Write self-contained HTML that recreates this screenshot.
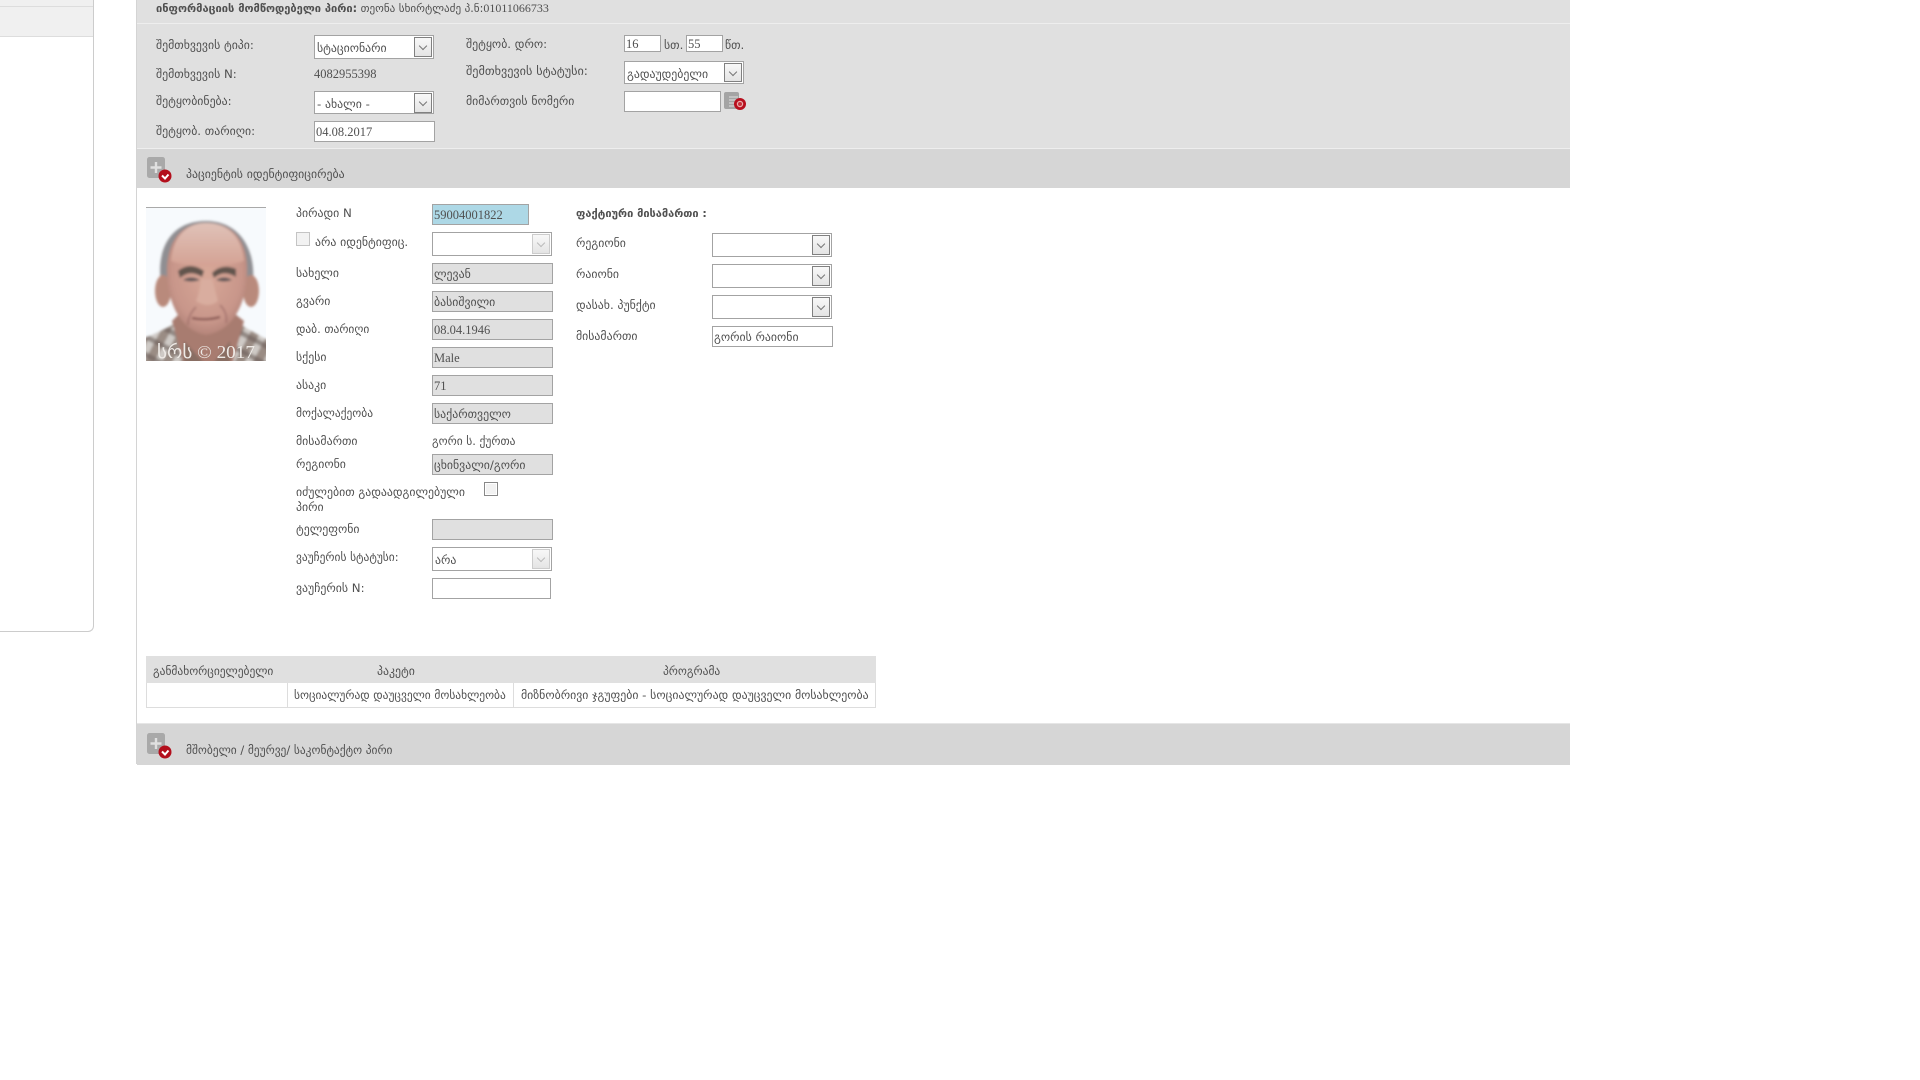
<!DOCTYPE html>
<html lang="ka"><head><meta charset="utf-8"><title>ფორმა</title>
<style>
html,body{margin:0;padding:0;background:#fff;width:1920px;height:1080px;overflow:hidden}
body{position:relative;font-family:"Liberation Serif","DejaVu Sans",sans-serif;font-size:12px;color:#444}
div,span,svg{position:absolute;box-sizing:border-box}
.t{line-height:16px;white-space:nowrap;font-family:"DejaVu Sans",sans-serif;font-size:11.8px;color:#505050;padding-top:1px}
.m{font-size:11.45px}
.n{font-family:"Liberation Serif",serif;font-size:12.5px}
.b{font-weight:bold}
.i{background:#fff;border:1px solid #a3a3a3;line-height:21px;padding-left:1px;white-space:nowrap;font-size:12.5px;color:#505050;font-family:"Liberation Serif","DejaVu Sans",sans-serif}
.k{font-size:11.8px;font-family:"DejaVu Sans",sans-serif}
.g{background:#e0e0e0}
.s{background:#fff;border:1px solid #a3a3a3;height:24px;width:120px;line-height:25px;padding-left:2px;color:#505050;white-space:nowrap;font-size:11.8px;font-family:"DejaVu Sans",sans-serif}
.a{right:1px;top:1px;width:18px;height:20px;background:linear-gradient(#f8f8f8,#e4e4e4);border:1px solid #808080}
.d{border-color:#ccc}
.a:after{content:"";position:absolute;left:5px;top:5px;width:5px;height:5px;border-right:1px solid #777;border-bottom:1px solid #777;transform:rotate(45deg)}
.d:after{border-color:#bbb}
.x{width:14px;height:14px;background:#f2f2f2;border:1px solid #c4c4c4}
.h{left:137px;width:1433px;background:#d6d6d6}
</style></head><body>

<!-- sidebar -->
<div style="left:0;top:0;width:94px;height:632px;border-right:1px solid #ccc;border-bottom:1px solid #ccc;border-bottom-right-radius:6px"></div>
<div style="left:0;top:0;width:93px;height:37px;background:#f0f0f0;border-bottom:1px solid #ddd"></div>
<div style="left:0;top:6px;width:93px;height:1px;background:#ddd"></div>

<!-- main -->
<div style="left:136px;top:0;width:1px;height:764px;background:#d4d4d4"></div>
<div style="left:137px;top:0;width:1433px;height:149px;background:#e0e0e0"></div>
<div style="left:137px;top:23px;width:1433px;height:1px;background:#eee"></div>
<div style="left:137px;top:148px;width:1433px;height:1px;background:#eee"></div>

<div class="t" style="left:156px;top:-1px;font-size:11.1px"><span class="b" style="position:static">ინფორმაციის მომწოდებელი პირი:</span> თეონა სხირტლაძე პ.ნ:<span class="n" style="position:static;font-size:12px">01011066733</span></div>

<div class="t" style="left:156px;top:36px">შემთხვევის ტიპი:</div>
<div class="s" style="left:314px;top:35px">სტაციონარი<div class="a"></div></div>
<div class="t" style="left:156px;top:65px">შემთხვევის N:</div>
<div class="t n" style="left:314px;top:65px">4082955398</div>
<div class="t" style="left:156px;top:92px">შეტყობინება:</div>
<div class="s" style="left:314px;top:91px;height:23px">- ახალი -<div class="a"></div></div>
<div class="t" style="left:156px;top:122px">შეტყობ. თარიღი:</div>
<div class="i" style="left:314px;top:121px;width:121px;height:21px">04.08.2017</div>

<div class="t" style="left:466px;top:35px">შეტყობ. დრო:</div>
<div class="i" style="left:624px;top:35px;width:37px;height:17px;line-height:16px">16</div>
<div class="t" style="left:664px;top:36px">სთ.</div>
<div class="i" style="left:686px;top:35px;width:37px;height:17px;line-height:16px">55</div>
<div class="t" style="left:725px;top:36px">წთ.</div>
<div class="t" style="left:466px;top:62px;font-size:12.2px">შემთხვევის სტატუსი:</div>
<div class="s" style="left:624px;top:61px;height:23px;line-height:24px">გადაუდებელი<div class="a" style="height:19px"></div></div>
<div class="t" style="left:466px;top:92px">მიმართვის ნომერი</div>
<div class="i" style="left:624px;top:91px;width:97px;height:21px"></div>
<svg style="left:724px;top:92px" width="23" height="18" viewBox="0 0 23 18"><rect x="0" y="0" width="15" height="17" rx="2" fill="#a4a4a4"/><path d="M5 5h9M5 8h9M5 11h9M5 14h9" stroke="#e0e0e0"/><circle cx="16" cy="12" r="6" fill="#b80f1e"/><circle cx="16" cy="12" r="2.6" fill="#c8303a" stroke="#eab0b0" stroke-width="1.200"/></svg>

<!-- header 1 -->
<div class="h" style="top:149px;height:39px"></div>
<svg style="left:147px;top:157px" width="25" height="26" viewBox="0 0 25 26"><rect width="18" height="21" rx="2.5" fill="#a9a9a9"/><path d="M9 5v11M3.500 10.500h11" stroke="#e0e0e0" stroke-width="2.400"/><circle cx="18" cy="19" r="6.500" fill="#b30f1c"/><path d="M15 18.500l3 3 3.500-4" fill="none" stroke="#fff" stroke-width="2"/></svg>
<div class="t" style="left:186px;top:165px">პაციენტის იდენტიფიცირება</div>

<!-- photo -->
<svg style="left:146px;top:207px" width="120" height="154" viewBox="0 0 120 154">
<defs>
<radialGradient id="f" cx=".5" cy=".45" r=".62"><stop offset="0" stop-color="#d8a898"/><stop offset=".7" stop-color="#c8968a"/><stop offset="1" stop-color="#a87a70"/></radialGradient>
<linearGradient id="fh" x1="0" x2="0" y1="0" y2="1"><stop offset="0" stop-color="#e0c2b8"/><stop offset="1" stop-color="#d4a294"/></linearGradient>
<pattern id="pl" width="16" height="16" patternUnits="userSpaceOnUse" patternTransform="rotate(28)"><rect width="16" height="16" fill="#9a8c84"/><rect width="7" height="16" fill="#cfcac6"/><rect y="0" width="16" height="5" fill="#6a5e58" opacity=".6"/></pattern>
<filter id="bl" x="-5%" y="-5%" width="110%" height="110%"><feGaussianBlur stdDeviation="1.200"/></filter>
<clipPath id="cp"><rect width="120" height="154"/></clipPath>
</defs>
<g clip-path="url(#cp)">
<rect width="120" height="154" fill="#f7fafd"/>
<g filter="url(#bl)">
<path d="M-4 158V132Q12 126 30 116L92 116Q108 126 124 134V158Z" fill="url(#pl)"/>
<path d="M26 114L38 158H86L98 114 80 100H40Z" fill="#a87c70"/>
<path d="M38 134L60 158H38ZM84 134L66 158H84Z" fill="#7c6860" opacity=".7"/>
<path d="M15 76C10 40 26 14 60 14 92 14 110 40 107 76L98 84V48H24L22 84Z" fill="#8f8e92"/>
<ellipse cx="17" cy="84" rx="8" ry="16" fill="#b98a7c"/>
<ellipse cx="105" cy="84" rx="8" ry="16" fill="#b98a7c"/>
<path d="M21 60C23 28 40 16 60 16 84 16 100 30 101 60 102 94 88 124 60 128 34 124 20 94 21 60Z" fill="url(#f)"/>
<path d="M25 54C27 28 42 16 60 16 80 16 96 28 98 54 80 60 40 60 25 54Z" fill="url(#fh)"/>
<path d="M32 64Q44 54 58 64L56 70Q44 62 34 71ZM66 66Q76 56 90 62L90 70Q78 62 68 71Z" fill="#62544e"/>
<path d="M37 73Q45 68 54 73 45 76 37 73ZM70 73Q78 68 86 73 78 76 70 73Z" fill="#5e5658"/>
<path d="M55 72Q53 88 50 94 62 102 72 94 70 86 66 72Z" fill="#d9ad9f"/>
<path d="M46 111Q60 114 74 110" stroke="#7e4c48" stroke-width="2" fill="none"/>
<path d="M50 100Q42 108 42 118M74 98Q82 106 80 116" stroke="#a0706a" stroke-width="1.500" fill="none"/>
</g>
<text x="11" y="151" font-family="'Liberation Serif','DejaVu Sans',serif" font-size="18" fill="#eeeae6" textLength="98" lengthAdjust="spacingAndGlyphs">სრს © 2017</text>
</g>
<rect width="120" height="1" fill="#a9a9a9"/>
</svg>

<!-- patient left -->
<div class="t" style="left:296px;top:204px">პირადი N</div>
<div class="i" style="left:432px;top:204px;width:97px;height:21px;background:#add8e6">59004001822</div>
<div class="x" style="left:296px;top:232px"></div>
<div class="t" style="left:315px;top:233px">არა იდენტიფიც.</div>
<div class="s" style="left:432px;top:232px"><div class="a d"></div></div>

<div class="t" style="left:296px;top:264px">სახელი</div>
<div class="i g k" style="left:432px;top:263px;width:121px;height:21px">ლევან</div>
<div class="t" style="left:296px;top:292px">გვარი</div>
<div class="i g k" style="left:432px;top:291px;width:121px;height:21px">ბასიშვილი</div>
<div class="t m" style="left:296px;top:320px">დაბ. თარიღი</div>
<div class="i g" style="left:432px;top:319px;width:121px;height:21px">08.04.1946</div>
<div class="t" style="left:296px;top:348px">სქესი</div>
<div class="i g" style="left:432px;top:347px;width:121px;height:21px">Male</div>
<div class="t" style="left:296px;top:376px">ასაკი</div>
<div class="i g" style="left:432px;top:375px;width:121px;height:21px">71</div>
<div class="t m" style="left:296px;top:404px">მოქალაქეობა</div>
<div class="i g k" style="left:432px;top:403px;width:121px;height:21px">საქართველო</div>
<div class="t" style="left:296px;top:432px">მისამართი</div>
<div class="t m" style="left:432px;top:432px">გორი ს. ქურთა</div>
<div class="t" style="left:296px;top:455px">რეგიონი</div>
<div class="i g k" style="left:432px;top:454px;width:121px;height:21px">ცხინვალი/გორი</div>
<div class="t" style="left:296px;top:483px">იძულებით გადაადგილებული</div>
<div class="t" style="left:296px;top:498px">პირი</div>
<div class="x" style="left:484px;top:482px;border:1px solid #888;box-shadow:inset 0 0 0 1px #fff"></div>
<div class="t" style="left:296px;top:520px">ტელეფონი</div>
<div class="i g" style="left:432px;top:519px;width:121px;height:21px"></div>
<div class="t m" style="left:296px;top:548px">ვაუჩერის სტატუსი:</div>
<div class="s" style="left:432px;top:547px">არა<div class="a d"></div></div>
<div class="t" style="left:296px;top:579px">ვაუჩერის N:</div>
<div class="i" style="left:432px;top:578px;width:119px;height:21px"></div>

<!-- patient right -->
<div class="t b" style="left:576px;top:205px;font-size:11px">ფაქტიური მისამართი :</div>
<div class="t" style="left:576px;top:234px">რეგიონი</div>
<div class="s" style="left:712px;top:233px"><div class="a"></div></div>
<div class="t" style="left:576px;top:265px">რაიონი</div>
<div class="s" style="left:712px;top:264px"><div class="a"></div></div>
<div class="t" style="left:576px;top:296px">დასახ. პუნქტი</div>
<div class="s" style="left:712px;top:295px"><div class="a"></div></div>
<div class="t" style="left:576px;top:327px">მისამართი</div>
<div class="i k" style="left:712px;top:326px;width:121px;height:21px">გორის რაიონი</div>

<!-- table -->
<div style="left:146px;top:656px;width:730px;height:52px;border:1px solid #ddd"></div>
<div style="left:146px;top:656px;width:730px;height:27px;background:#e0e0e0"></div>
<div style="left:287px;top:683px;width:1px;height:25px;background:#ddd"></div>
<div style="left:513px;top:683px;width:1px;height:25px;background:#ddd"></div>
<div class="t m" style="left:153px;top:662px">განმახორციელებელი</div>
<div class="t" style="left:377px;top:662px">პაკეტი</div>
<div class="t m" style="left:663px;top:662px">პროგრამა</div>
<div class="t m" style="left:294px;top:686px">სოციალურად დაუცველი მოსახლეობა</div>
<div class="t" style="left:521px;top:686px">მიზნობრივი ჯგუფები - სოციალურად დაუცველი მოსახლეობა</div>

<!-- header 2 -->
<div style="left:137px;top:723px;width:1433px;height:1px;background:#e6e6e6"></div>
<div class="h" style="top:724px;height:41px"></div>
<svg style="left:147px;top:733px" width="25" height="26" viewBox="0 0 25 26"><rect width="18" height="21" rx="2.5" fill="#a9a9a9"/><path d="M9 5v11M3.500 10.500h11" stroke="#e0e0e0" stroke-width="2.400"/><circle cx="18" cy="19" r="6.500" fill="#b30f1c"/><path d="M15 18.500l3 3 3.500-4" fill="none" stroke="#fff" stroke-width="2"/></svg>
<div class="t m" style="left:186px;top:741px">მშობელი / მეურვე/ საკონტაქტო პირი</div>
</body></html>
